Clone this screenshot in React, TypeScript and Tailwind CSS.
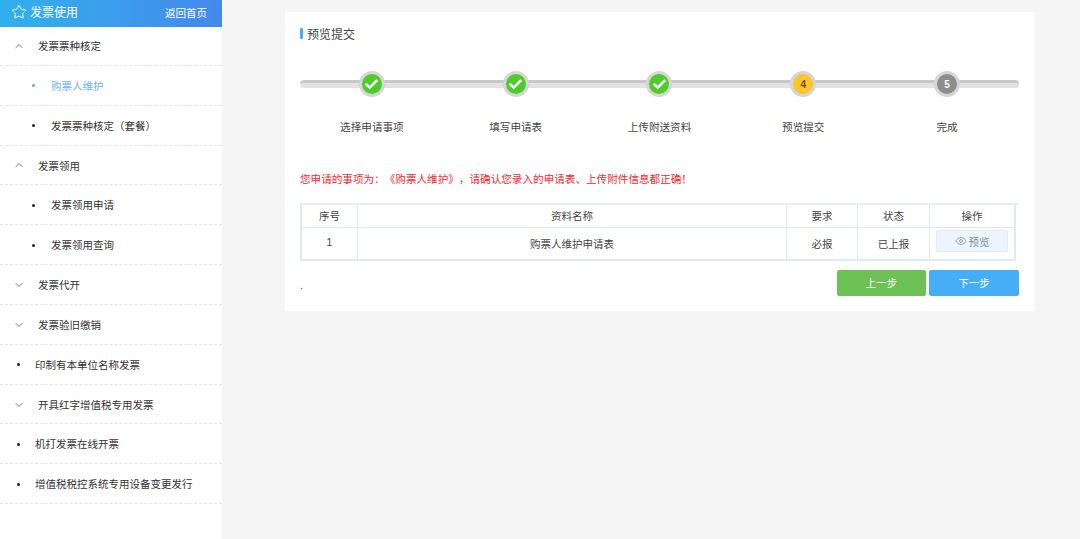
import { Check, ChevronDown, ChevronUp, Eye, Star } from "lucide-react";

type MenuItem = {
  label: string;
  kind: "open" | "closed" | "sub" | "leaf";
  active?: boolean;
};

const menu: MenuItem[] = [
  { label: "发票票种核定", kind: "open" },
  { label: "购票人维护", kind: "sub", active: true },
  { label: "发票票种核定（套餐）", kind: "sub" },
  { label: "发票领用", kind: "open" },
  { label: "发票领用申请", kind: "sub" },
  { label: "发票领用查询", kind: "sub" },
  { label: "发票代开", kind: "closed" },
  { label: "发票验旧缴销", kind: "closed" },
  { label: "印制有本单位名称发票", kind: "leaf" },
  { label: "开具红字增值税专用发票", kind: "closed" },
  { label: "机打发票在线开票", kind: "leaf" },
  { label: "增值税税控系统专用设备变更发行", kind: "leaf" },
];

const steps = [
  { label: "选择申请事项", state: "done" },
  { label: "填写申请表", state: "done" },
  { label: "上传附送资料", state: "done" },
  { label: "预览提交", state: "current", num: 4 },
  { label: "完成", state: "todo", num: 5 },
];

const Sidebar = () => (
  <div className="w-[222px] shrink-0 bg-white min-h-[539px]">
    <div className="h-[27px] mb-[-1px] flex items-center justify-between pl-[11px] pr-[15px] pb-[3px] text-white bg-gradient-to-r from-[#2fb1ec] to-[#4488ec]">
      <div className="flex items-center gap-[3px]">
        <Star size={16} strokeWidth={1.5} />
        <span className="text-[12px]">发票使用</span>
      </div>
      <span className="text-[10.5px] mt-[1px]">返回首页</span>
    </div>
    {menu.map((item) => (
      <div
        key={item.label}
        className="h-[39.85px] pt-[1px] flex items-center border-b border-dashed border-[#e4e4e4] text-[10.5px] text-[#333]"
      >
        {item.kind === "open" && (
          <>
            <ChevronUp size={12} strokeWidth={1.5} className="ml-[13px] text-[#444]" />
            <span className="ml-[13px]">{item.label}</span>
          </>
        )}
        {item.kind === "closed" && (
          <>
            <ChevronDown size={12} strokeWidth={1.5} className="ml-[13px] text-[#444]" />
            <span className="ml-[13px]">{item.label}</span>
          </>
        )}
        {item.kind === "sub" && (
          <>
            <span className={`ml-[32px] w-[3px] h-[3px] rounded-full ${item.active ? "bg-[#5fa8f5]" : "bg-[#222]"}`} />
            <span className={`ml-[16px] ${item.active ? "text-[#6db2f7]" : ""}`}>{item.label}</span>
          </>
        )}
        {item.kind === "leaf" && (
          <>
            <span className="ml-[17px] w-[3px] h-[3px] rounded-full bg-[#222]" />
            <span className="ml-[15px]">{item.label}</span>
          </>
        )}
      </div>
    ))}
  </div>
);

const StepCircle = ({ state, num }: { state: string; num?: number }) => {
  if (state === "done") {
    return (
      <div className="w-[26px] h-[26px] rounded-full bg-[#4fcb2d] border-[3px] border-[#d6d6d6] flex items-center justify-center text-white">
        <Check size={15} strokeWidth={4} />
      </div>
    );
  }
  return (
    <div
      className={`w-[26px] h-[26px] rounded-full border-[3px] border-[#d6d6d6] flex items-center justify-center text-[10px] font-bold font-['Liberation_Sans',sans-serif] ${
        state === "current" ? "bg-[#fdc52a] text-[#6b4e00]" : "bg-[#8d8d8d] text-white"
      }`}
    >
      {num}
    </div>
  );
};

const Stepper = () => (
  <div className="mt-[30px]">
    <div className="relative">
      <div className="absolute left-0 right-0 top-[9px] h-2 rounded-full bg-[#e2e2e2] border-t-[3px] border-[#c9c9c9]" />
      <div className="relative grid grid-cols-5">
        {steps.map((s) => (
          <div key={s.label} className="flex justify-center">
            <StepCircle state={s.state} num={s.num} />
          </div>
        ))}
      </div>
    </div>
    <div className="grid grid-cols-5 mt-[22px]">
      {steps.map((s) => (
        <div key={s.label} className="text-center text-[10.6px] leading-[16px] text-[#444]">
          {s.label}
        </div>
      ))}
    </div>
  </div>
);

const FileTable = () => (
  <div className="border-t-2 border-[#e3eff7]">
    <div className="w-[716px] border-2 border-t-0 border-[#dcebf5] text-[10.5px] text-[#444]">
      <div className="grid grid-cols-[55px_429px_71px_72px_1fr] h-[23px] border-b border-[#dcebf5] text-center leading-[21px]">
        <div>序号</div>
        <div className="border-l border-[#dcebf5]">资料名称</div>
        <div className="border-l border-[#dcebf5]">要求</div>
        <div className="border-l border-[#dcebf5]">状态</div>
        <div className="border-l border-[#dcebf5]">操作</div>
      </div>
      <div className="grid grid-cols-[55px_429px_71px_72px_1fr] h-[31px] text-center leading-[31px]">
        <div className="font-['Liberation_Sans',sans-serif] leading-[29px]">1</div>
        <div className="border-l border-[#dcebf5]">购票人维护申请表</div>
        <div className="border-l border-[#dcebf5]">必报</div>
        <div className="border-l border-[#dcebf5]">已上报</div>
        <div className="border-l border-[#dcebf5] pl-[6px] pt-[2px]">
          <div className="w-[72px] h-[22px] rounded-[2px] bg-[#eef4fb] border border-[#e2ecf6] flex items-center justify-center gap-[2px] text-[#7d8fa3]">
            <Eye size={12} strokeWidth={1.5} />
            <span>预览</span>
          </div>
        </div>
      </div>
    </div>
  </div>
);

export default function App() {
  return (
    <div className="flex w-[1080px] h-[539px] overflow-hidden bg-[#f5f5f5] [text-spacing-trim:space-all] font-['Noto_Sans_CJK_SC','Noto_Sans',sans-serif]">
      <Sidebar />
      <div className="ml-[63px] mt-[12px] w-[749px] h-[299px] bg-white pl-[15px] pr-[15px]">
        <div className="flex items-center gap-[4px] pt-[14px] h-[29px] text-[12px] text-[#444]">
          <span className="w-[3px] h-[11px] rounded-[1px] bg-[#45aef5]" />
          <span>预览提交</span>
        </div>
        <Stepper />
        <div className="mt-[36px] text-[10.6px] leading-[16px] text-[#f5262d]">
          您申请的事项为：《购票人维护》，请确认您录入的申请表、上传附件信息都正确！
        </div>
        <div className="mt-[16px]">
          <FileTable />
        </div>
        <div className="flex items-center justify-between mt-[9px]">
          <span className="text-[10px] text-[#555] mt-[3px]">.</span>
          <div className="flex gap-[3px] text-[10.5px] text-white">
            <div className="w-[89px] h-[26px] rounded-[2px] bg-[#6cc054] flex items-center justify-center">上一步</div>
            <div className="w-[90px] h-[26px] rounded-[2px] bg-[#46aef7] flex items-center justify-center">下一步</div>
          </div>
        </div>
      </div>
    </div>
  );
}
